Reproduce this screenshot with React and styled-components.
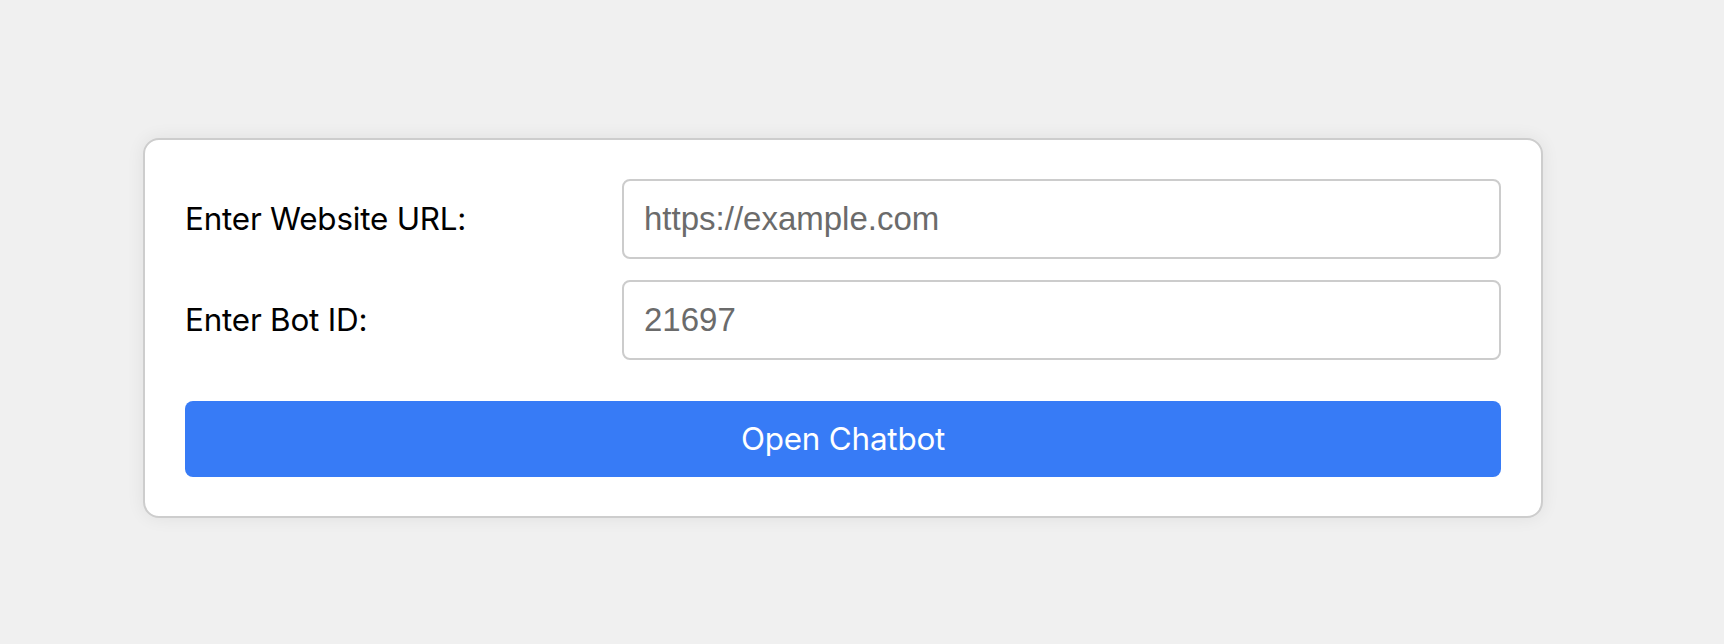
import styled, { createGlobalStyle } from "styled-components";

const GlobalStyle = createGlobalStyle`
  html, body {
    margin: 0;
    padding: 0;
    background: #f0f0f0;
  }
  body {
    font-family: Inter, "Noto Sans", sans-serif;
  }
`;

const Page = styled.div`
  min-height: 644px;
  padding: 138px 0 0 143px;
  box-sizing: border-box;
`;

const Card = styled.div`
  width: 1400px;
  box-sizing: border-box;
  background: #fff;
  border: 2px solid #cdcdcd;
  border-radius: 16px;
  padding: 39px 40px 39px;
  box-shadow: 0 0 18px rgba(0, 0, 0, 0.07);
  display: flex;
  flex-direction: column;
`;

const Row = styled.div`
  display: grid;
  grid-template-columns: 437px 1fr;
  align-items: center;
  margin-bottom: ${(p) => p.$gap}px;
`;

const Label = styled.label`
  font-size: 31.4px;
  color: #000;
  letter-spacing: -0.2px;
`;

const Input = styled.input`
  height: 80px;
  box-sizing: border-box;
  border: 2px solid #cccccc;
  border-radius: 8px;
  padding: 0 20px;
  font-family: "Liberation Sans", Arial, sans-serif;
  font-size: 33px;
  color: #6b6b6b;
  outline: none;
  &::placeholder {
    color: #6b6b6b;
  }
`;

const Button = styled.button`
  height: 76px;
  border: none;
  border-radius: 8px;
  background: #377bf6;
  color: #fff;
  font-family: Inter, "Noto Sans", sans-serif;
  font-size: 31.4px;
  letter-spacing: -0.2px;
  cursor: pointer;
`;

export default function App() {
  return (
    <>
      <GlobalStyle />
      <Page>
        <Card>
          <Row $gap={21}>
            <Label>Enter Website URL:</Label>
            <Input type="text" placeholder="https://example.com" />
          </Row>
          <Row $gap={41}>
            <Label>Enter Bot ID:</Label>
            <Input type="text" placeholder="21697" />
          </Row>
          <Button>Open Chatbot</Button>
        </Card>
      </Page>
    </>
  );
}
